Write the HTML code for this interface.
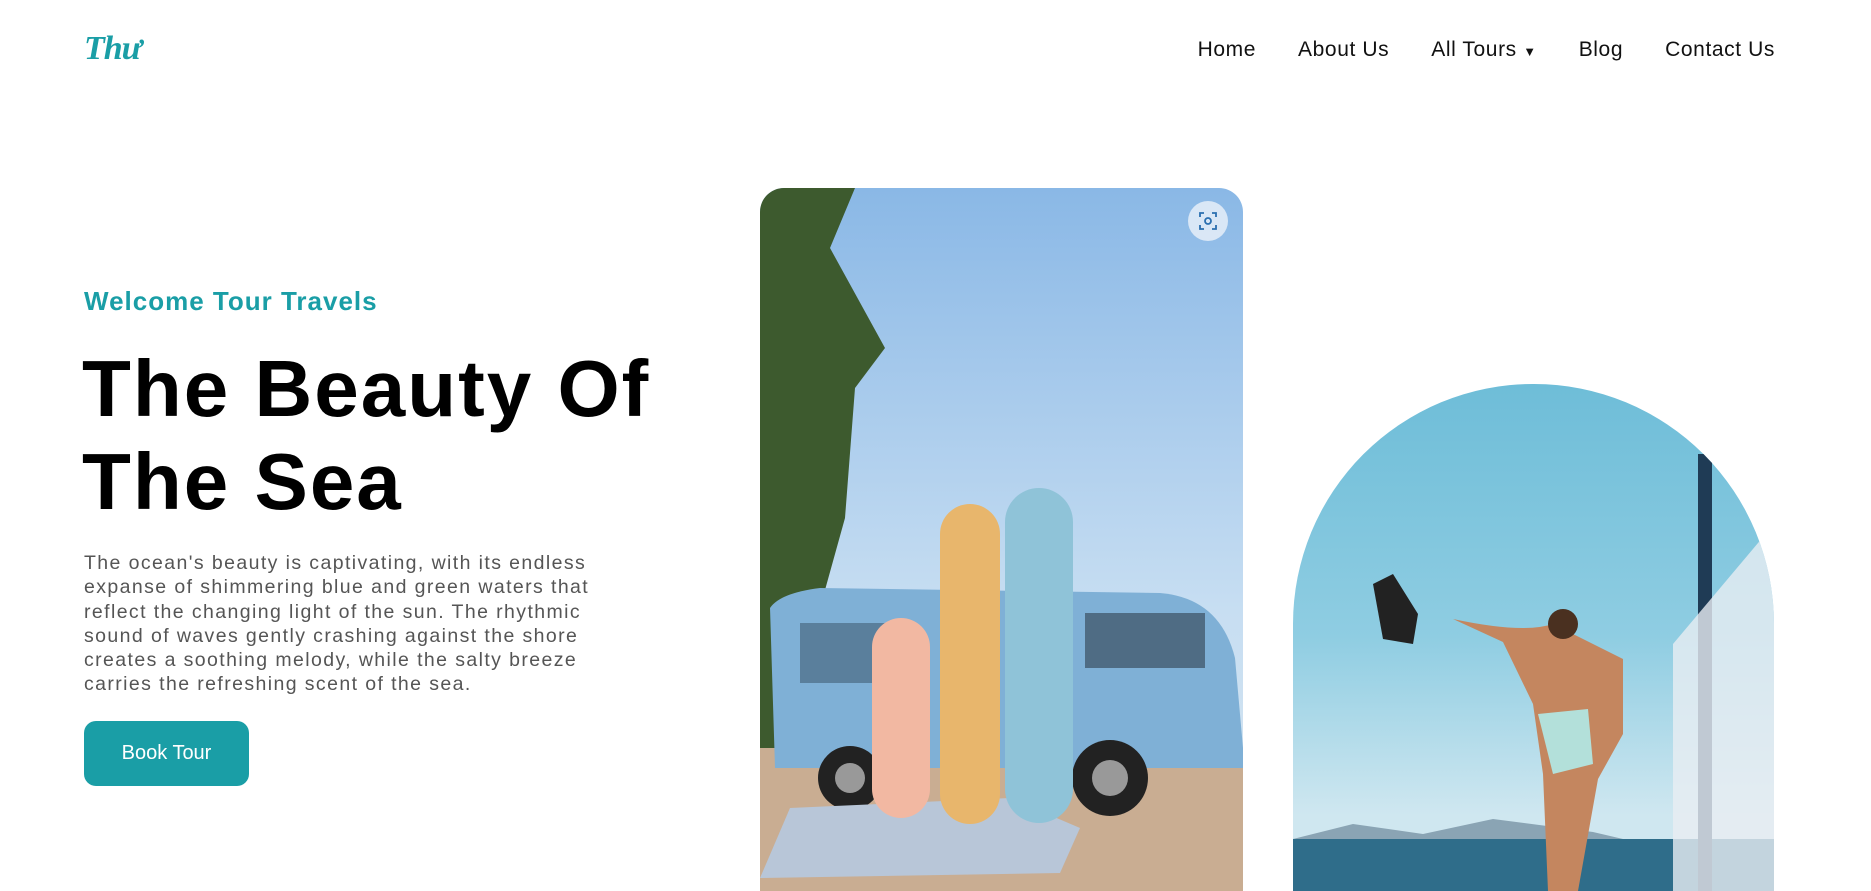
<!DOCTYPE html>
<html><head><meta charset="utf-8"><style>
*{margin:0;padding:0;box-sizing:border-box}
body{width:1871px;height:891px;overflow:hidden;background:#fff;font-family:"Liberation Sans",sans-serif;position:relative}
.logo{position:absolute;left:84px;top:30px;font-family:"Liberation Serif",serif;font-style:italic;font-weight:bold;font-size:34px;color:#1a9ea6;letter-spacing:-1px}
.nav{position:absolute;top:38px;right:96px;display:flex;gap:42px;font-size:21px;color:#111;letter-spacing:0.6px}
.w{position:absolute;left:84px;top:286px;font-size:26px;font-weight:bold;color:#1a9ea6;letter-spacing:1px}
h1{position:absolute;left:82px;top:342px;font-size:80px;line-height:93px;font-weight:bold;color:#000;width:720px;letter-spacing:2px}
p{position:absolute;left:84px;top:551px;width:640px;font-size:19.5px;line-height:24.3px;color:#555;letter-spacing:1.4px}
.btn{position:absolute;left:84px;top:721px;width:165px;height:65px;border-radius:12px;background:#1a9ea6;color:#fff;font-size:20px;display:flex;align-items:center;justify-content:center}
.i1{position:absolute;left:760px;top:188px;width:483px;height:703px;border-radius:24px 24px 0 0;overflow:hidden;background:linear-gradient(#8ab8e6,#c7def2 60%,#d8e6ef)}
.i2{position:absolute;left:1293px;top:384px;width:481px;height:507px;border-radius:240px 240px 0 0;overflow:hidden;background:linear-gradient(#6ebdd8,#8fcde2 50%,#cfe7f0 85%)}
.ic{position:absolute;left:1188px;top:201px;width:40px;height:40px;border-radius:50%;background:rgba(230,238,248,.85);display:flex;align-items:center;justify-content:center}
</style></head><body>
<div class="logo">Thư</div>
<div class="nav"><span>Home</span><span>About Us</span><span>All Tours <span style="font-size:13px">▼</span></span><span>Blog</span><span>Contact Us</span></div>
<div class="w">Welcome Tour Travels</div>
<h1>The Beauty Of<br>The Sea</h1>
<p>The ocean's beauty is captivating, with its endless<br>expanse of shimmering blue and green waters that<br>reflect the changing light of the sun. The rhythmic<br>sound of waves gently crashing against the shore<br>creates a soothing melody, while the salty breeze<br>carries the refreshing scent of the sea.</p>
<div class="btn">Book Tour</div>
<div class="i1">
<svg width="483" height="703" viewBox="0 0 483 703">
<path d="M0 0 L95 0 L70 60 L125 160 L95 200 L85 330 L60 420 L40 560 L0 600Z" fill="#3d5a2e"/>
<path d="M0 560 L483 560 L483 703 L0 703Z" fill="#c9ad92"/>
<path d="M10 420 Q20 405 60 400 L400 405 Q460 410 475 470 L483 560 L483 580 L15 580Z" fill="#7fb0d6"/>
<rect x="40" y="435" width="100" height="60" fill="#5a7f9c"/>
<rect x="325" y="425" width="120" height="55" fill="#4f6c84"/>
<circle cx="90" cy="590" r="32" fill="#222"/><circle cx="90" cy="590" r="15" fill="#999"/>
<circle cx="350" cy="590" r="38" fill="#222"/><circle cx="350" cy="590" r="18" fill="#999"/>
<path d="M30 620 L250 610 L320 640 L300 685 L0 690Z" fill="#b8c6d8"/>
<rect x="112" y="430" width="58" height="200" rx="29" fill="#f2b8a2"/>
<rect x="180" y="316" width="60" height="320" rx="30" fill="#e8b66c"/>
<rect x="245" y="300" width="68" height="335" rx="34" fill="#8fc3d8"/>
</svg></div>
<div class="ic"><svg width="20" height="20" viewBox="0 0 20 20" fill="none" stroke="#2a6fb0" stroke-width="1.8"><path d="M2 6V2H6M14 2H18V6M18 14V18H14M6 18H2V14"/><circle cx="10" cy="10" r="3"/></svg></div>
<div class="i2">
<svg width="481" height="507" viewBox="0 0 481 507">
<rect x="0" y="455" width="481" height="60" fill="#2f6d8a"/>
<path d="M0 455 L60 440 L130 450 L200 435 L300 448 L330 455Z" fill="#8aa4b4"/>
<rect x="405" y="70" width="14" height="437" fill="#1f3b55"/>
<path d="M380 260 L481 140 L481 507 L380 507Z" fill="#e8eef2" opacity=".8"/>
<path d="M160 235 Q230 250 260 240 L330 275 L330 350 L305 395 L285 507 L255 507 L250 390 L240 320 L210 258Z" fill="#c4865f"/>
<path d="M245 330 L295 325 L300 380 L260 390Z" fill="#b3e0da"/>
<circle cx="270" cy="240" r="15" fill="#4a3020"/>
<path d="M80 200 L100 190 L125 230 L120 260 L90 255Z" fill="#222"/>
</svg></div>
</body></html>
